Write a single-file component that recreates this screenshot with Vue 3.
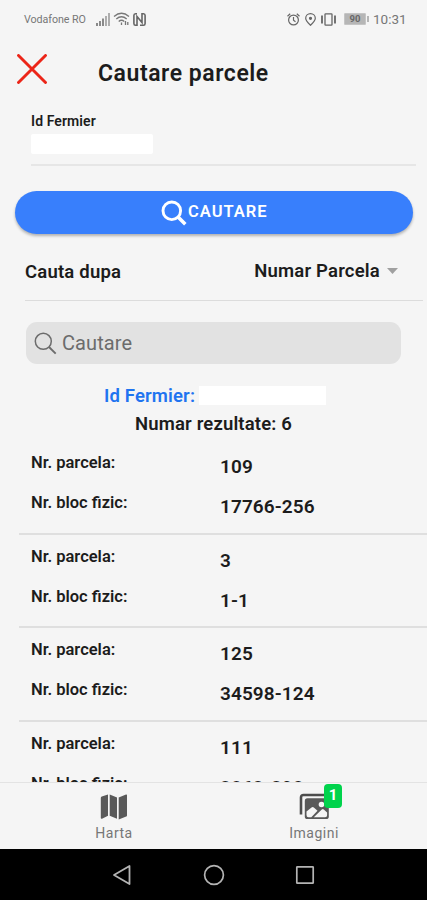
<script setup>
const parcels = [
  { id: '109', block: '17766-256' },
  { id: '3', block: '1-1' },
  { id: '125', block: '34598-124' },
  { id: '111', block: '3863-298' },
]
</script>

<template>
  <div class="screen">
    <div class="status">
      <span class="carrier">Vodafone RO</span>
      <svg class="signal" width="14" height="13" viewBox="0 0 14 13">
        <path d="M1 10v3M4 8v5M7 5.500v7.500" stroke="#777" stroke-width="1.700" />
        <path d="M10 3v10M13 0v13" stroke="#aaa" stroke-width="1.900" />
      </svg>
      <svg class="wifi" width="17" height="14" viewBox="0 0 17 14" fill="none" stroke="#777" stroke-width="1.300">
        <path d="M1 4.500Q8.500-2 16 4.500M3.300 7Q8.500 2.500 13.700 7M5.700 9.500Q8.500 7 11.300 9.500" />
        <path d="M8.500 10.500v2.500M12.500 9v4M14.800 10v3" />
      </svg>
      <svg class="nfc" width="13" height="13" viewBox="0 0 13 13" fill="none" stroke="#666">
        <path d="M4 .8H2.500Q.9.800.9 2.500v8q0 1.700 1.600 1.700H4V3.500l5 6V.8h1.500q1.600 0 1.600 1.700v8q0 1.700-1.600 1.700H7" stroke-width="1.600" />
      </svg>
      <span class="grow"></span>
      <svg class="alarm" width="13" height="13" viewBox="0 0 13 13" fill="none" stroke="#666" stroke-width="1.200">
        <circle cx="6.500" cy="7" r="4.900" /><path d="M6.500 4v3.200l2 1.500M.5 3.200 3.200.8M9.800.8l2.700 2.400" />
      </svg>
      <svg class="pin" width="11" height="13" viewBox="0 0 11 13" fill="none" stroke="#666" stroke-width="1.200">
        <path d="M5.500 12.300Q.7 7.700.7 5.300a4.800 4.600 0 0 1 9.600 0q0 2.400-4.800 7Z" /><circle cx="5.500" cy="5.300" r="1" fill="#666" />
      </svg>
      <svg class="vibrate" width="17" height="13" viewBox="0 0 17 13" fill="none" stroke="#666" stroke-width="1.300">
        <rect x="5" y=".8" width="7" height="11.400" rx=".6" /><path d="M2 2.500v8M15 2.500v8" stroke-width="1.800" />
      </svg>
      <span class="battery">90</span>
      <span class="clock">10:31</span>
    </div>

    <header class="header">
      <svg width="30" height="30" viewBox="0 0 30 30">
        <path d="M1.500 1.500l27 27M28.500 1.500l-27 27" stroke="#ec2518" stroke-width="2.900" stroke-linecap="round" />
      </svg>
      <h1>Cautare parcele</h1>
    </header>

    <section class="field">
      <label>Id Fermier</label>
      <div class="mask"></div>
    </section>

    <button class="primary">
      <svg width="26" height="26" viewBox="0 0 26 26" fill="none" stroke="#fff">
        <circle cx="10.800" cy="10.800" r="8.800" stroke-width="2.900" /><path d="M17.300 17.300l7 7" stroke-width="3.500" />
      </svg>
      <span>CAUTARE</span>
    </button>

    <div class="select">
      <span class="by">Cauta dupa</span>
      <span class="choice">Numar Parcela</span>
      <svg width="11" height="6" viewBox="0 0 11 6"><path d="M0 0h11L5.500 6Z" fill="#a0a0a0" /></svg>
    </div>

    <div class="search">
      <svg width="23" height="23" viewBox="0 0 23 23" fill="none" stroke="#6c6c6c">
        <circle cx="9.300" cy="9.300" r="8" stroke-width="1.500" /><path d="M15 15l6.700 6.700" stroke-width="1.900" />
      </svg>
      <span>Cautare</span>
    </div>

    <div class="summary">
      <div class="farmer"><span>Id Fermier:</span><i></i></div>
      <div class="count">Numar rezultate: 6</div>
    </div>

    <main class="list">
      <article v-for="p in parcels" :key="p.id" class="parcel">
        <div class="line"><span class="key">Nr. parcela:</span><span class="val">{{ p.id }}</span></div>
        <div class="line"><span class="key">Nr. bloc fizic:</span><span class="val">{{ p.block }}</span></div>
      </article>
    </main>

    <nav class="tabs">
      <div class="tab map">
        <svg width="28" height="26" viewBox="0 0 28 26" fill="#595959">
          <path d="M.8 4Q.8 3 1.800 2.600L8 .5v21.300l-6 2.900Q.8 25 .8 24ZM9.700.5 17 3.500v21.300l-7.300-3ZM18.700 3.500 26 .6q1-.4 1 .7v20.200q0 .8-.8 1.100l-7.500 2.800Z" />
        </svg>
        <span>Harta</span>
      </div>
      <div class="tab images">
        <svg width="31" height="27" viewBox="0 0 31 27">
          <path d="M2 21.500V4.500Q2 2 4.500 2H26" fill="none" stroke="#4d4d4d" stroke-width="2.600" />
          <rect x="5.800" y="5.300" width="24" height="20.700" rx="2.600" fill="#595959" />
          <path d="M7.500 22v-3.500l5-4q1.300-1 2.600.2l3.400 3-6.200 6.600H9.500q-2 0-2-2.300ZM14.800 24.300l8-7.800q1-.9 2 0l3.300 3v2.700q0 2.100-2 2.100Z" fill="#f5f5f5" />
          <circle cx="22.500" cy="11.500" r="2.800" fill="#f5f5f5" />
        </svg>
        <b class="badge">1</b>
        <span>Imagini</span>
      </div>
    </nav>

    <footer class="system">
      <svg width="20" height="22" viewBox="0 0 20 22"><path d="M17.500 2v18L2 11Z" fill="none" stroke="#b4b4b4" stroke-width="1.800" stroke-linejoin="round" /></svg>
      <svg width="22" height="22" viewBox="0 0 22 22"><circle cx="11" cy="11" r="9.400" fill="none" stroke="#b4b4b4" stroke-width="1.700" /></svg>
      <svg width="20" height="20" viewBox="0 0 20 20"><rect x="1.800" y="1.800" width="16.400" height="16.400" rx=".5" fill="none" stroke="#b4b4b4" stroke-width="1.700" /></svg>
    </footer>
  </div>
</template>

<style>
body { background: #f5f5f5; }
</style>

<style scoped>
* { box-sizing: border-box; }
.screen { width: 427px; height: 900px; display: flex; flex-direction: column; overflow: hidden; background: #f5f5f5; color: #1c1c1c; font-family: Roboto, "Liberation Sans", sans-serif; white-space: nowrap; }
.screen > * { flex-shrink: 0; }
svg { display: block; flex: none; }
.status { height: 38px; display: flex; align-items: center; padding: 0 20px 0 24px; color: #777; }
.carrier { font-size: 10.700px; width: 72px; letter-spacing: -.05px; }
.wifi { margin-left: 3px; }
.nfc { margin-left: 3px; }
.grow { flex: 1; }
.pin { margin-left: 5px; }
.vibrate { margin-left: 4px; }
.battery { position: relative; width: 22px; height: 12px; margin-left: 7px; background: #b6b6b6; border: 1px solid #c5c5c5; border-radius: 1px; font-size: 9.500px; line-height: 10px; font-weight: 700; color: #686868; text-align: center; }
.battery::after { content: ""; position: absolute; right: -4px; top: 2px; width: 2px; height: 6px; background: #b6b6b6; }
.clock { width: 34px; margin-left: 7px; font-size: 13.500px; }
.header { height: 70px; display: flex; padding: 16px 17px 0; }
.header h1 { margin: 5px 0 0 51px; font-size: 23px; line-height: 30px; font-weight: 600; letter-spacing: .55px; }
.field { height: 58px; margin: 0 11px 0 31px; padding-top: 4px; border-bottom: 2px solid #e6e6e6; }
.field label { display: block; font-size: 14px; line-height: 18px; font-weight: 600; letter-spacing: .1px; }
.mask { width: 122px; height: 20px; margin-top: 4px; background: #fff; border-radius: 2px; }
.primary { display: flex; align-items: center; height: 43px; margin: 25px 14px 0 15px; padding: 0 0 0 146px; border: 0; border-radius: 22px; background: #387ffc; color: #fff; font: 600 16.500px/22px Roboto, sans-serif; letter-spacing: 1px; box-shadow: 0 2px 3px rgba(0, 0, 0, .28); }
.primary span { margin: -2px 0 0 1px; }
.select { height: 67px; display: flex; align-items: center; margin: 0 4px 0 25px; padding: 8px 25px 0 0; border-bottom: 1px solid #dcdcdc; font-size: 18.500px; font-weight: 600; letter-spacing: .2px; }
.by { flex: 1; padding-top: 2px; }
.select svg { margin-left: 7px; }
.search { height: 42px; margin: 21px 26px 0 26px; padding-left: 8px; border-radius: 11px; background: #e2e2e2; display: flex; align-items: center; color: #6c6c6c; font-size: 20px; letter-spacing: .1px; }
.search span { margin-left: 5px; }
.summary { height: 77px; padding-top: 17px; font-size: 18.500px; font-weight: 600; line-height: 28px; letter-spacing: .15px; }
.farmer { display: flex; align-items: center; padding-left: 104px; color: #1f74f0; }
.farmer span { width: 95px; padding-top: 1px; }
.farmer i { width: 127px; height: 19px; background: #fff; }
.count { text-align: center; }
.list { flex: 1 1 0; min-height: 0; overflow: hidden; }
.parcel { height: 93.700px; margin-left: 19px; padding: 7px 0 0 12px; border-bottom: 2px solid #dfdfdf; }
.line { height: 40px; display: flex; line-height: 30px; font-weight: 600; }
.key { width: 189px; font-size: 16.500px; }
.val { padding-top: 4px; font-size: 19px; letter-spacing: .1px; }
.tabs { height: 67px; display: flex; border-top: 1px solid #e3e3e3; color: #777; font-size: 14px; letter-spacing: .5px; }
.tab { position: relative; display: flex; flex-direction: column; align-items: center; width: 228px; padding-top: 11px; }
.tab.images { width: 172px; padding-top: 10px; }
.tab span { margin-top: 4px; line-height: 18px; }
.badge { position: absolute; left: 96px; top: 1px; width: 18px; height: 24px; border-radius: 4px; background: #00d34c; color: #fff; font-size: 15px; line-height: 23px; text-align: center; letter-spacing: 0; }
.system { height: 51px; display: flex; align-items: center; padding-left: 112px; background: #000; }
.system svg + svg { margin-left: 71px; }
.system svg:last-child { margin-left: 70px; }
</style>
